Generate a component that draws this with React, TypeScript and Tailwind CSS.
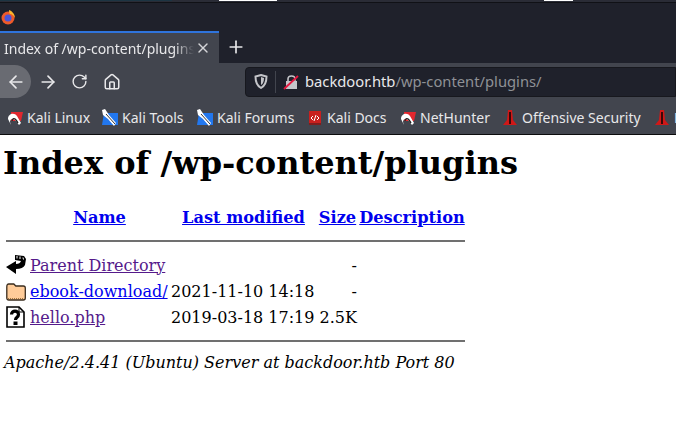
import { ArrowLeft, ArrowRight, House, Plus, RotateCw, X } from 'lucide-react';

const bookmarks = [
  { name: 'Kali Linux', icon: 'kali', width: 'w-[95px]' },
  { name: 'Kali Tools', icon: 'tool', width: 'w-[95px]' },
  { name: 'Kali Forums', icon: 'tool', width: 'w-[111px]' },
  { name: 'Kali Docs', icon: 'docs', width: 'w-[92px]' },
  { name: 'NetHunter', icon: 'kali', width: 'w-[103px]' },
  { name: 'Offensive Security', icon: 'offsec', width: 'w-[152px]' },
  { name: 'Exploit-DB', icon: 'offsec', width: 'w-[90px]' },
];

const rows = [
  { icon: 'back', name: 'Parent Directory', visited: true, date: '', size: '-' },
  { icon: 'folder', name: 'ebook-download/', visited: false, date: '2021-11-10 14:18', size: '-' },
  { icon: 'file', name: 'hello.php', visited: true, date: '2019-03-18 17:19', size: '2.5K' },
];

function BookmarkIcon({ kind }: { kind: string }) {
  if (kind === 'kali')
    return (
      <svg width="16" height="16" viewBox="0 0 16 16" className="shrink-0">
        <path d="M4 2h12l-2 9H4z" fill="#e2272e" />
        <path d="M1 9c0-5 6-7 9-3l4 7-2 2-4-5c-2-2-5-1-5 2l1 3z" fill="#fff" />
        <path d="M5 11c0-3 3-3 4-1l2 3" fill="none" stroke="#222" strokeWidth="1.4" />
      </svg>
    );
  if (kind === 'tool')
    return (
      <svg width="16" height="17" viewBox="0 0 16 17" className="shrink-0">
        <path d="M2 4h14v12H0z" fill="#2277ee" />
        <path d="M0 1l3-1 4 6 7 8-2 3-6-7-5-4z" fill="#fff" />
        <path d="M4 5l9 10" stroke="#333" strokeWidth="1" />
      </svg>
    );
  if (kind === 'docs')
    return (
      <svg width="14" height="16" viewBox="0 0 14 16" className="mr-[1px] shrink-0">
        <path d="M1 1h12v14H1z" fill="#c8201f" />
        <path d="M1 13h12v2H1z" fill="#7f1d1d" />
        <path d="M5 6L3 8l2 2M9 6l2 2-2 2M8 5L6 11" fill="none" stroke="#fff" strokeWidth="1" />
      </svg>
    );
  return (
    <svg width="14" height="18" viewBox="0 0 14 18" className="mr-[1px] shrink-0">
      <path d="M5 1h4l1 10 4 5H0l4-5z" fill="#d01818" />
      <path d="M6 3h2v12H6z" fill="#3a0808" />
    </svg>
  );
}

function RowIcon({ kind }: { kind: string }) {
  if (kind === 'back')
    return (
      <svg width="20" height="22" viewBox="0 0 20 22" className="block">
        <path d="M9 1l9 1 2 3-1 6q-2 4-9 4v5L0 13l10-6v3q4 0 5-3l-6-1z" fill="#000" />
        <path d="M11 2v2.500M14 2.500V5M17 3.500l.5 2" stroke="#fff" strokeWidth="1" />
      </svg>
    );
  if (kind === 'folder')
    return (
      <svg width="20" height="22" viewBox="0 0 20 22" className="block">
        <path d="M.800 7q0-3 2-3h5l2 2h7.500q2 0 2 2v10q0 2-2 2h-14.500q-2 0-2-2z" fill="#ffcc99" stroke="#3a2c1e" strokeWidth="1.300" />
        <path d="M2 18.500h16" stroke="#a5763f" strokeWidth="1.200" strokeDasharray="1 1" />
      </svg>
    );
  return (
    <svg width="20" height="22" viewBox="0 0 20 22" className="block">
      <path d="M1 1h12l5 5v15H1z" fill="#fff" stroke="#000" strokeWidth="1.600" />
      <path d="M13 1v5h5" fill="none" stroke="#000" strokeWidth="1" />
      <path d="M5.500 8.500c0-4.500 7-4.500 7 0 0 3-3 2.500-3 5.500" fill="none" stroke="#000" strokeWidth="3.200" />
      <path d="M7.500 15.500h4v3.500h-4z" fill="#000" />
    </svg>
  );
}

export default function App() {
  return (
    <div className="h-[442px] w-[676px] overflow-hidden bg-white">
      {/* Browser chrome */}
      <div className="h-[135px] bg-[#1f212b] font-['Noto_Sans',sans-serif] text-[#e8e8ea]">
        <div className="flex h-[3px] border-b border-[#101116] bg-[#2a2c36]">
          <div className="h-[1px] w-[172px] bg-[#1c3442]" />
          <div className="ml-[47px] h-[1px] w-[58px] bg-white" />
          <div className="ml-[267px] h-[1px] w-[29px] bg-white" />
        </div>
        <div className="flex h-[28px] items-center pl-[1px]">
          <svg width="14" height="15" viewBox="0 0 14 15">
            <circle cx="7" cy="8" r="6.500" fill="#ee5a2a" />
            <circle cx="7" cy="8" r="3.500" fill="#4a55d8" />
            <path d="M8 0c3 1 6 4 6 8-1-2-3-4-5-4-1-1-1-3-1-4z" fill="#fbb62c" />
          </svg>
        </div>
        <div className="flex h-[32px]">
          <div className="flex w-[219px] items-center border-t-2 border-[#2f74dc] bg-[#42454e] pl-[4px]">
            <span className="w-[190px] overflow-hidden text-[14px] whitespace-nowrap [mask-image:linear-gradient(to_right,black_170px,transparent_190px)]">
              Index of /wp-content/plugins
            </span>
            <X className="ml-[1px] h-4 w-4 text-[#d5d6d9]" />
          </div>
          <div className="flex w-[34px] items-center justify-center">
            <Plus className="h-5 w-5" />
          </div>
        </div>
        <div className="flex h-[37px] items-center bg-[#42454e]">
          <div className="flex h-[33px] w-[31px] items-center justify-center rounded-r-full bg-[#696b72]">
            <ArrowLeft className="h-5 w-5" />
          </div>
          <ArrowRight className="ml-[7px] h-5 w-5" />
          <RotateCw className="ml-[13px] h-[17px] w-[17px]" />
          <House className="ml-[15px] h-[18px] w-[18px]" />
          <div className="ml-[124px] flex h-[30px] flex-1 items-center rounded-l-[4px] border border-[#17181e] bg-[#1f212b] pl-[8px]">
            <svg width="14" height="15" viewBox="0 0 14 15">
              <path d="M7 1l5.500 1.500c0 5-1 9-5.500 11.500C2.500 11.500 1.500 7.500 1.500 2.500z" fill="none" stroke="#c4c5c9" strokeWidth="2" />
              <path d="M7 3v8c2-1 3-4 3-7z" fill="#c4c5c9" />
            </svg>
            <div className="mx-[7px] h-[22px] w-[1px] bg-[#42454e]" />
            <svg width="16" height="16" viewBox="0 0 16 16">
              <path d="M3 7h11v8H3z" fill="#c4c5c9" />
              <path d="M5 7V5c0-4 7-4 7 0v2" fill="none" stroke="#c4c5c9" strokeWidth="1.600" />
              <path d="M1 15L15 2" stroke="#e5173f" strokeWidth="1.800" />
            </svg>
            <span className="ml-[6px] text-[14.750px] whitespace-nowrap">
              backdoor.htb<span className="text-[#8f9196]">/wp-content/plugins/</span>
            </span>
          </div>
        </div>
        <div className="flex h-[35px] items-center overflow-hidden border-b border-[#0c0c0d] bg-[#42454e] pt-[1px] pl-[7px] text-[14px] whitespace-nowrap">
          {bookmarks.map((b) => (
            <div key={b.name} className={`flex shrink-0 items-center gap-[4px] ${b.width}`}>
              <BookmarkIcon kind={b.icon} />
              <span>{b.name}</span>
            </div>
          ))}
        </div>
      </div>

      {/* Directory listing */}
      <div className="px-[4px] font-['DejaVu_Serif',serif] text-[16px] leading-[19px] text-black">
        <h1 className="mt-[9px] -ml-[1px] text-[32px] leading-[38px] font-bold">Index of /wp-content/plugins</h1>
        <table className="mt-[22px] w-[463px] table-fixed border-separate border-spacing-[2px]">
          <colgroup>
            <col className="w-[22px]" />
            <col className="w-[139px]" />
            <col className="w-[145px]" />
            <col className="w-[39px]" />
            <col className="w-[106px]" />
          </colgroup>
          <thead>
            <tr className="h-[22px] text-[16.200px]">
              <th />
              <th className="text-center text-[#0000ee] underline">Name</th>
              <th className="text-center whitespace-nowrap text-[#0000ee] underline">Last modified</th>
              <th className="text-center text-[#0000ee] underline">Size</th>
              <th className="text-center text-[#0000ee] underline">Description</th>
            </tr>
            <tr>
              <th colSpan={5} className="h-[21px] align-middle">
                <div className="h-[2px] bg-[#707070]" />
              </th>
            </tr>
          </thead>
          <tbody>
            {rows.map((row) => (
              <tr key={row.name} className="h-[24px]">
                <td className="align-middle"><RowIcon kind={row.icon} /></td>
                <td className={row.visited ? 'whitespace-nowrap text-[#551a8b] underline' : 'whitespace-nowrap text-[#0000ee] underline'}>
                  {row.name}
                </td>
                <td className="whitespace-nowrap">{row.date}</td>
                <td className="text-right">{row.size}</td>
                <td />
              </tr>
            ))}
            <tr>
              <th colSpan={5} className="h-[20px] align-middle">
                <div className="h-[2px] bg-[#707070]" />
              </th>
            </tr>
          </tbody>
        </table>
        <div className="text-[16px] italic">Apache/2.4.41 (Ubuntu) Server at backdoor.htb Port 80</div>
      </div>
    </div>
  );
}
